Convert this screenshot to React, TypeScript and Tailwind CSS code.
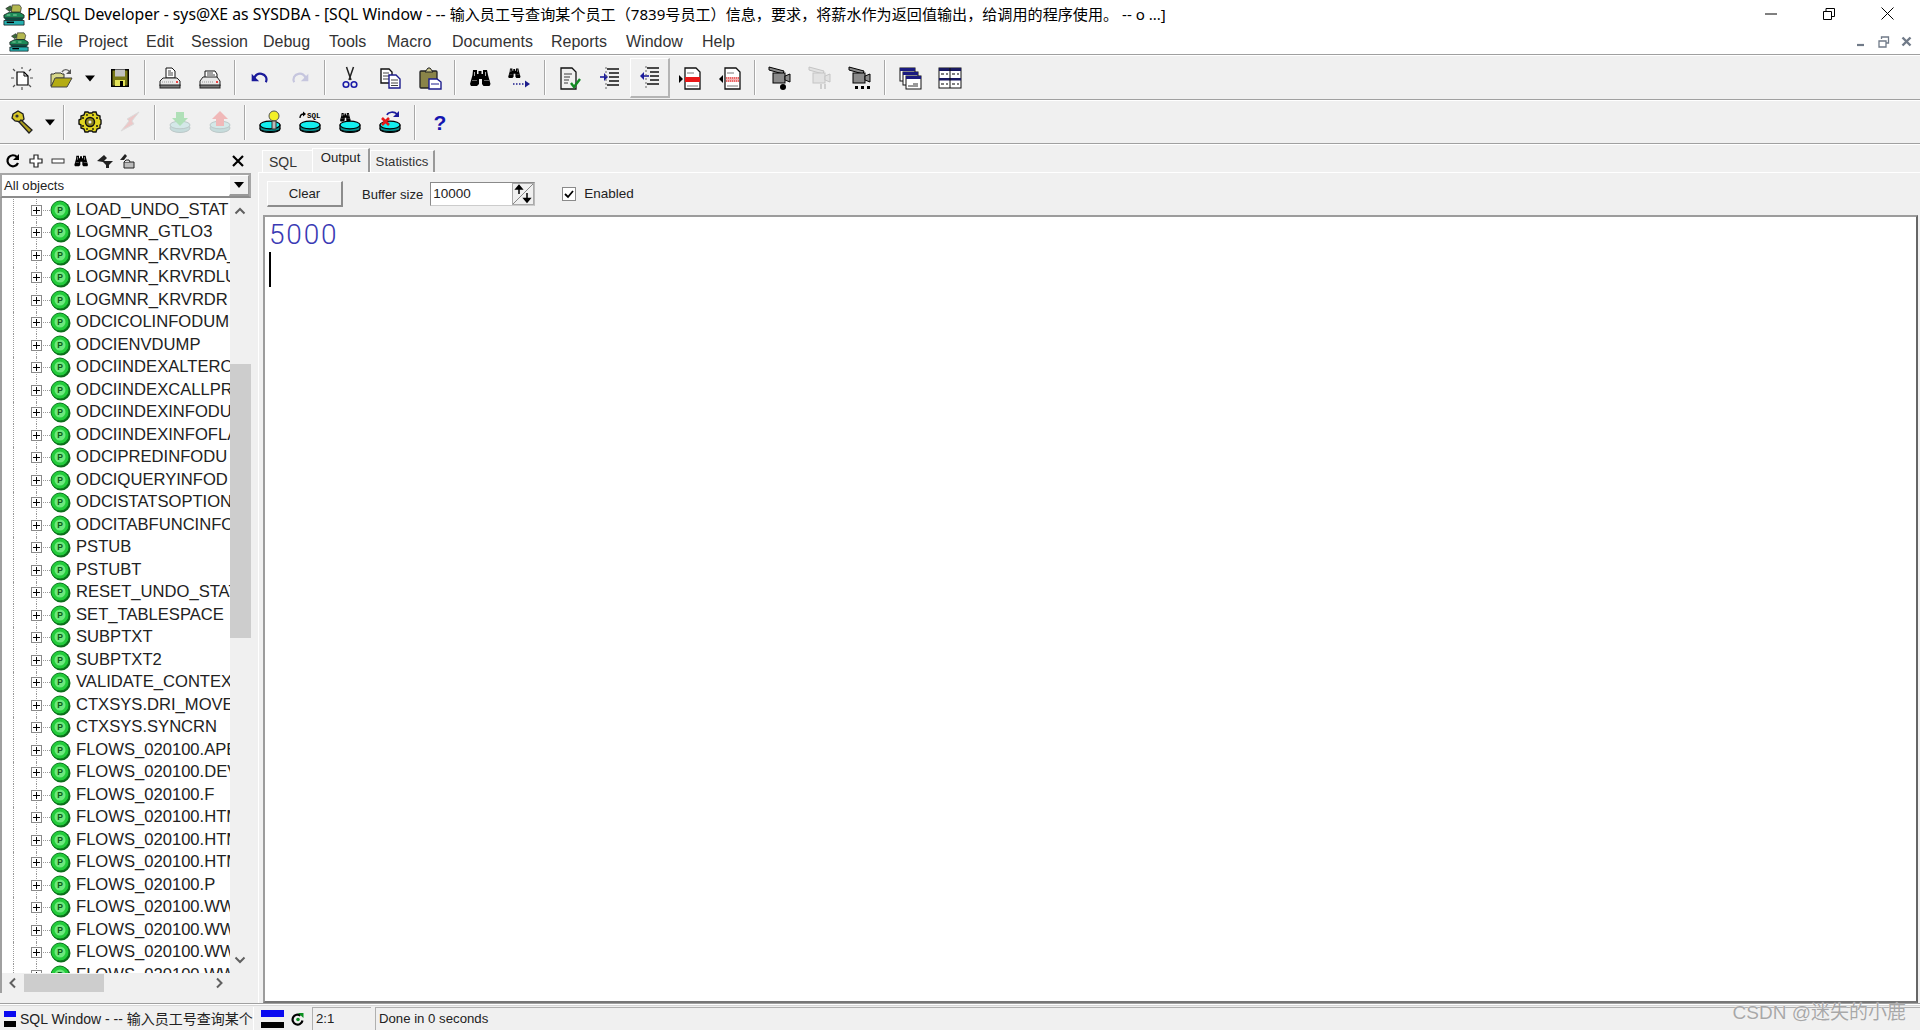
import type { ReactNode } from 'react';

const menus = [
  { label: 'File', w: 'w-[41px]' },
  { label: 'Project', w: 'w-[68px]' },
  { label: 'Edit', w: 'w-[45px]' },
  { label: 'Session', w: 'w-[72px]' },
  { label: 'Debug', w: 'w-[66px]' },
  { label: 'Tools', w: 'w-[58px]' },
  { label: 'Macro', w: 'w-[65px]' },
  { label: 'Documents', w: 'w-[99px]' },
  { label: 'Reports', w: 'w-[75px]' },
  { label: 'Window', w: 'w-[76px]' },
  { label: 'Help', w: 'w-[50px]' },
];

const objects = [
  'LOAD_UNDO_STAT', 'LOGMNR_GTLO3', 'LOGMNR_KRVRDA_T', 'LOGMNR_KRVRDLUI', 'LOGMNR_KRVRDR',
  'ODCICOLINFODUMP', 'ODCIENVDUMP', 'ODCIINDEXALTERO', 'ODCIINDEXCALLPR', 'ODCIINDEXINFODU',
  'ODCIINDEXINFOFLA', 'ODCIPREDINFODU', 'ODCIQUERYINFOD', 'ODCISTATSOPTION', 'ODCITABFUNCINFO',
  'PSTUB', 'PSTUBT', 'RESET_UNDO_STAT', 'SET_TABLESPACE', 'SUBPTXT', 'SUBPTXT2',
  'VALIDATE_CONTEXT', 'CTXSYS.DRI_MOVE', 'CTXSYS.SYNCRN', 'FLOWS_020100.APEX', 'FLOWS_020100.DEV',
  'FLOWS_020100.F', 'FLOWS_020100.HTML', 'FLOWS_020100.HTML', 'FLOWS_020100.HTML', 'FLOWS_020100.P',
  'FLOWS_020100.WWV', 'FLOWS_020100.WWV', 'FLOWS_020100.WWV', 'FLOWS_020100.WWV',
];

function Svg({ size = 24, children }: { size?: number; children: ReactNode }) {
  return (
    <svg width={size} height={size} viewBox="0 0 24 24" className="block shrink-0">
      {children}
    </svg>
  );
}

function Binoculars({ x = 0, y = 0, s = 1 }: { x?: number; y?: number; s?: number }) {
  return (
    <g transform={`translate(${x} ${y}) scale(${s})`}>
      <path d="M5 4h4v4h1.500V5h3v3H15V4h4l1 5 2.500 9-1 2h-6l-1.500-2v-5h-3v5L9 20H3l-1-2 2.500-9z" fill="#000" />
      <path d="M6 6h1v4H6zM17 6h1v4h-1z" fill="#aaa" />
      <path d="M4 14h5v1H4zM16 14h5v1h-5z" fill="#666" />
    </g>
  );
}

function Disc({ children }: { children?: ReactNode }) {
  return (
    <Svg>
      <path d="M2 15v4c0 2 4.500 3.500 10 3.500s10-1.500 10-3.500v-4z" fill="#0a8c8c" stroke="#000" strokeWidth="1.200" />
      <path d="M2 18.500c0 2 4.500 3 10 3s10-1 10-3" fill="none" stroke="#000" strokeWidth="1" />
      <ellipse cx="12" cy="15" rx="10" ry="3.800" fill="#14f0f0" stroke="#000" strokeWidth="1.200" />
      {children}
    </Svg>
  );
}

function Camera({ dim, children }: { dim?: boolean; children: ReactNode }) {
  const c = dim ? '#c4c4c4' : '#000';
  const f = dim ? '#e2e2e2' : '#8a8a8a';
  return (
    <Svg>
      <path d="M1 1l15 4-1 3L1 4z" fill={f} stroke={c} />
      <rect x="5" y="7" width="12" height="10" fill={f} stroke={c} />
      <path d="M17 10l5-2v8l-5-2z" fill={f} stroke={c} />
      {children}
    </Svg>
  );
}

function Logo({ size }: { size: number }) {
  return (
    <svg width={size} height={size} viewBox="0 0 24 24" className="block shrink-0">
      <path d="M3 5l5-3 3 3-4 3z" fill="#3a6a3a" stroke="#222" strokeWidth="0.700" />
      <path d="M10 1h8l2 3-1 5H9z" fill="#b4b850" stroke="#333" strokeWidth="0.800" />
      <path d="M1 12l6-3h11l5 3v3H1z" fill="#1c8a58" stroke="#111" strokeWidth="0.800" />
      <path d="M4 12h4M11 12h4" stroke="#9fe0b0" />
      <path d="M1 15h22l-2 3H3z" fill="#0c4a40" />
      <path d="M1 18h22v5H1z" fill="#26b0b0" stroke="#111" strokeWidth="0.800" />
      <path d="M4 20h8" stroke="#000" strokeWidth="1.600" />
    </svg>
  );
}

const icons: Record<string, ReactNode> = {
  newFile: (
    <Svg>
      <path d="M7 6h7l4 4v9H7z" fill="#fff" stroke="#000" strokeWidth="1.200" />
      <path d="M14 6v4h4" fill="none" stroke="#000" />
      <path d="M12 1v2M12 21v3M1 12h3M20 12h3M3 3l2 2M3 21l2-2M21 3l-2 2M21 21l-2-2" stroke="#555" strokeWidth="1.200" />
    </Svg>
  ),
  open: (
    <Svg>
      <path d="M2 20V8h3l1-1h6l1 1h2v4H7z" fill="#d8d88a" stroke="#333" />
      <path d="M2 21l4-9h17l-5 9z" fill="#b4ac14" stroke="#444" />
      <path d="M13 6c2-3 5-3 7-1" fill="none" stroke="#666" strokeWidth="1.400" />
      <path d="M22 3v5h-5z" fill="#555" />
    </Svg>
  ),
  caret: (
    <Svg size={12}>
      <path d="M2 7h20L12 19z" fill="#000" />
    </Svg>
  ),
  save: (
    <Svg>
      <rect x="3" y="3" width="18" height="18" fill="#000" />
      <rect x="4.500" y="4.500" width="15" height="15" fill="#777718" />
      <rect x="7" y="3.500" width="10" height="7" fill="#c2c2c2" />
      <rect x="7" y="14" width="10" height="6" fill="#e4e45a" />
      <rect x="12" y="15" width="3" height="5" fill="#000" />
    </Svg>
  ),
  print: (
    <Svg>
      <path d="M8 2h6l3 3v7H8z" fill="#fff" stroke="#111" />
      <path d="M10 5h3M10 7h5M10 9h5" stroke="#444" />
      <path d="M5 12h14l3 3v5H2v-5z" fill="#e8e8e8" stroke="#222" />
      <rect x="2" y="19" width="20" height="3" fill="#777" stroke="#222" />
      <path d="M4 16h12" stroke="#999" strokeDasharray="1 1" />
      <rect x="18" y="15" width="2" height="2" fill="#e44" />
    </Svg>
  ),
  print2: (
    <Svg>
      <path d="M7 5h10l2 3v4H7z" fill="#fff" stroke="#111" />
      <path d="M9 7h6M9 9h8" stroke="#444" />
      <path d="M5 11h14l3 4v5H2v-5z" fill="#e8e8e8" stroke="#222" />
      <rect x="2" y="19" width="20" height="3" fill="#777" stroke="#222" />
      <path d="M4 16h12" stroke="#999" strokeDasharray="1 1" />
      <rect x="18" y="15" width="2" height="2" fill="#e44" />
    </Svg>
  ),
  undo: (
    <Svg size={20}>
      <path d="M5 13c1-5 5-7 9-6 5 1 7 6 5 10" fill="none" stroke="#1a1a9a" strokeWidth="2.600" />
      <path d="M2 7v9h9z" fill="#1a1a9a" />
    </Svg>
  ),
  redo: (
    <Svg size={20}>
      <path d="M19 13c-1-5-5-7-9-6-5 1-7 6-5 10" fill="none" stroke="#c6c6de" strokeWidth="2.600" />
      <path d="M22 7v9h-9z" fill="#c6c6de" />
    </Svg>
  ),
  cut: (
    <Svg>
      <path d="M8.500 1l4.500 13M15.500 1L11 14" stroke="#222" strokeWidth="1.500" fill="none" />
      <circle cx="8" cy="18.500" r="2.800" fill="none" stroke="#1c1ca8" strokeWidth="1.600" />
      <circle cx="16" cy="18.500" r="2.800" fill="none" stroke="#1c1ca8" strokeWidth="1.600" />
    </Svg>
  ),
  copy: (
    <Svg>
      <path d="M3 3h8l3 3v11H3z" fill="#fff" stroke="#111" strokeWidth="1.400" />
      <path d="M5 7h6M5 10h6M5 13h6" stroke="#444" />
      <path d="M11 9h7l4 4v9H11z" fill="#fff" stroke="#1c1c8c" strokeWidth="1.400" />
      <path d="M13 14h7M13 17h7M13 19.500h7" stroke="#444" />
    </Svg>
  ),
  paste: (
    <Svg>
      <rect x="2" y="5" width="17" height="17" rx="1" fill="#8a8448" stroke="#222" strokeWidth="1.300" />
      <path d="M7 6l3-4h2l3 4z" fill="#c8c48a" stroke="#222" />
      <path d="M11 13h8l4 3v7H11z" fill="#fff" stroke="#1c1c8c" strokeWidth="1.400" />
      <path d="M13 18h8" stroke="#1c1c8c" />
    </Svg>
  ),
  find: <Svg><Binoculars /></Svg>,
  findNext: (
    <Svg>
      <Binoculars x={-1} y={0} s={0.6} />
      <path d="M5 18h13" stroke="#1c1c8c" strokeWidth="1.400" strokeDasharray="1.500 1.500" />
      <path d="M17 14.500v7l5-3.500z" fill="#1c1c8c" />
    </Svg>
  ),
  docCheck: (
    <Svg>
      <path d="M3 2h11l4 4v17H3z" fill="#efefef" stroke="#111" strokeWidth="1.300" />
      <path d="M6 8h8M6 11h6M6 14h5M6 17h4" stroke="#777" strokeWidth="1.400" />
      <path d="M13 17l3 4 6-8" fill="none" stroke="#118a22" strokeWidth="2.400" />
    </Svg>
  ),
  indent: (
    <Svg>
      <path d="M9 3h12M11 7h10M11 11h10M11 15h10M9 19h12" stroke="#111" strokeWidth="1.700" />
      <path d="M2 11h5" stroke="#1c1c9c" strokeWidth="1.600" />
      <path d="M6 7v8l4-4z" fill="#1c1c9c" />
      <path d="M8 1v22" stroke="#666" strokeDasharray="2 2" />
    </Svg>
  ),
  outdent: (
    <Svg>
      <path d="M9 3h12M12 7h9M12 11h9M12 15h9M9 19h12" stroke="#111" strokeWidth="1.700" />
      <path d="M5 11h6" stroke="#1c1c9c" strokeWidth="1.600" />
      <path d="M6 7v8l-4-4z" fill="#1c1c9c" />
      <path d="M8 1v22" stroke="#666" strokeDasharray="2 2" />
    </Svg>
  ),
  docRed: (
    <Svg>
      <path d="M7 2h11l4 4v17H7z" fill="#fff" stroke="#111" strokeWidth="1.300" />
      <path d="M9 7h7M9 20h11" stroke="#777" />
      <rect x="7" y="11" width="15" height="5" fill="#e81818" />
      <path d="M1 9l4 4-4 4z" fill="#000" />
    </Svg>
  ),
  docRedDots: (
    <Svg>
      <path d="M7 2h11l4 4v17H7z" fill="#fff" stroke="#111" strokeWidth="1.300" />
      <path d="M9 7h7M9 20h11" stroke="#777" />
      <rect x="8" y="11" width="13" height="5" fill="#f4b0b0" />
      <path d="M8 12h13M8 15h13" stroke="#e02020" strokeDasharray="1 1" />
      <path d="M5 9l-4 4 4 4z" fill="#000" />
    </Svg>
  ),
  camRec: (
    <Camera>
      <circle cx="15" cy="21" r="3" fill="#000" />
    </Camera>
  ),
  camPause: (
    <Camera dim>
      <path d="M12 18h2v5h-2zM16 18h2v5h-2z" fill="#cfcfcf" />
    </Camera>
  ),
  camDots: (
    <Camera>
      <path d="M7 20h3v3H7zM13 20h3v3h-3zM19 20h3v3h-3z" fill="#000" />
    </Camera>
  ),
  cascade: (
    <Svg>
      <rect x="2" y="2" width="15" height="13" fill="#fff" stroke="#111" />
      <rect x="2" y="2" width="15" height="3" fill="#1a1a80" />
      <rect x="5" y="6" width="15" height="13" fill="#fff" stroke="#111" />
      <rect x="5" y="6" width="15" height="3" fill="#1a1a80" />
      <rect x="8" y="10" width="15" height="13" fill="#fff" stroke="#111" />
      <rect x="8" y="10" width="15" height="3" fill="#1a1a80" />
      <path d="M15 18h5M10 20h10" stroke="#333" />
    </Svg>
  ),
  tile: (
    <Svg>
      <rect x="1" y="2" width="22" height="20" fill="#fff" stroke="#111" />
      <rect x="1" y="2" width="22" height="3" fill="#1a1a60" />
      <rect x="1" y="12" width="22" height="2.500" fill="#1a1a60" />
      <path d="M12 2v20" stroke="#111" />
      <path d="M3 8h3M8 8h2M14 8h3M19 8h2M3 18h3M8 18h2M14 18h3M19 18h2" stroke="#555" strokeWidth="1.500" />
    </Svg>
  ),
  key: (
    <Svg>
      <path d="M3 4l5-3 5 3 1 5-3 3-6-1-3-3z" fill="#d8c828" stroke="#222" strokeWidth="1.300" />
      <circle cx="7" cy="6" r="1.600" fill="#333" />
      <path d="M11 10l11 10-3 3L9 12z" fill="#b0a020" stroke="#222" strokeWidth="1.300" />
    </Svg>
  ),
  gear: (
    <Svg>
      <path d="M7 2h3l1 1h3l1-1h3l1 3 3 1v3l1 1v4l-1 1v3l-3 1-1 3h-3l-1-1h-3l-1 1H7l-1-3-3-1v-3l-2-1v-4l2-1V6l3-1z" fill="#e0d420" stroke="#111" strokeWidth="1.400" />
      <circle cx="12" cy="12" r="4.500" fill="#8c8420" stroke="#111" strokeWidth="1.400" />
      <circle cx="12" cy="12" r="1.500" fill="#eee" />
      <path d="M4 8h2M4 16h2M18 8h2M18 16h2M9 4v2M15 4v2M9 18v2M15 18v2" stroke="#111" strokeWidth="1.300" />
    </Svg>
  ),
  bolt: (
    <Svg>
      <path d="M21 2L9 9l2 2-8 10 13-7-2-3z" fill="#ecc8c8" stroke="#dcdcdc" />
    </Svg>
  ),
  dbDown: (
    <Svg>
      <ellipse cx="12" cy="18" rx="10" ry="4.500" fill="#c6dcdc" stroke="#bcc8c8" />
      <ellipse cx="12" cy="15" rx="10" ry="3.800" fill="#d4e8e8" stroke="#bcc8c8" />
      <path d="M8 2h8v6h4l-8 8-8-8h4z" fill="#b0e0b8" />
    </Svg>
  ),
  dbUp: (
    <Svg>
      <ellipse cx="12" cy="18" rx="10" ry="4.500" fill="#c6dcdc" stroke="#bcc8c8" />
      <ellipse cx="12" cy="15" rx="10" ry="3.800" fill="#d4e8e8" stroke="#bcc8c8" />
      <path d="M8 16h8v-7h4l-8-8-8 8h4z" fill="#f0b8b8" />
    </Svg>
  ),
  dbBulb: (
    <Disc>
      <circle cx="16" cy="6" r="5" fill="#f4f028" stroke="#555" />
      <path d="M14 11h4v8h-4z" fill="#bbb" stroke="#333" />
    </Disc>
  ),
  dbSql: (
    <Disc>
      <path d="M2 8c0-3 1-4 4-4" fill="none" stroke="#000" strokeWidth="1.300" />
      <path d="M5 1.500v5l3-2.500z" fill="#000" />
      <text x="9" y="8" fontSize="7.500" fontWeight="700" fontFamily="'Liberation Mono', monospace" fill="#000">SQL</text>
    </Disc>
  ),
  dbFind: (
    <Disc>
      <Binoculars x={1} y={1} s={0.52} />
    </Disc>
  ),
  dbCancel: (
    <Disc>
      <path d="M9 5c1-3 7-4 10-1" fill="none" stroke="#1c1c9c" strokeWidth="1.600" />
      <path d="M21 1v6h-6z" fill="#1c1c9c" />
      <path d="M4 8l7 7M11 8l-7 7" stroke="#e81818" strokeWidth="2.600" />
    </Disc>
  ),
  help: (
    <Svg>
      <text x="12" y="20" textAnchor="middle" fontSize="21" fontWeight="700" fontFamily="'Liberation Sans', sans-serif" fill="#1515b0">?</text>
    </Svg>
  ),
};

function Separator({ w }: { w: string }) {
  return (
    <div className={`${w} flex h-full items-center justify-center`}>
      <div className="h-[35px] w-[2px] border-l border-[#a8a8a8] bg-white" />
    </div>
  );
}

function Tool({ icon, pressed, w = 'w-10' }: { icon: string; pressed?: boolean; w?: string }) {
  return (
    <div
      className={`${w} flex h-[40px] items-center justify-center ${
        pressed ? 'border-t border-l border-white border-r-2 border-b-2 border-r-[#b4b4b4] border-b-[#b4b4b4]' : ''
      }`}
    >
      {icons[icon]}
    </div>
  );
}

function TopLine() {
  return <div className="h-[2px] w-full border-t border-[#a0a0a0] bg-white" />;
}

function ExplorerTool({ w, children }: { w: string; children: ReactNode }) {
  return <div className={`${w} flex items-center justify-center`}>{children}</div>;
}

function TreeRow({ name }: { name: string }) {
  return (
    <div className="flex h-[22.5px] shrink-0 items-center">
      <div className="h-full w-[11px] shrink-0" />
      <div className="h-full w-[18px] shrink-0 border-l border-dotted border-[#999]" />
      <div className="relative flex h-full w-[12px] shrink-0 items-center">
        <div className="absolute left-[5px] top-0 h-full border-l border-dotted border-[#999]" />
        <div className="relative flex h-[11px] w-[11px] items-center justify-center border border-[#8a8a8a] bg-white">
          <svg width="7" height="7" viewBox="0 0 7 7" className="block">
            <path d="M0 3.500h7M3.500 0v7" stroke="#000" strokeWidth="1" />
          </svg>
        </div>
      </div>
      <div className="w-[7px] shrink-0 border-t border-dotted border-[#999]" />
      <svg width="21" height="21" viewBox="0 0 21 21" className="block shrink-0">
        <circle cx="11" cy="11" r="9.500" fill="#0a6c18" />
        <circle cx="10" cy="10" r="9" fill="#22cc3a" stroke="#0c7a20" />
        <circle cx="10" cy="10" r="5.500" fill="#6ee87e" />
        <text x="10" y="13" textAnchor="middle" fontSize="8.500" fontWeight="700" fontFamily="'Liberation Sans', sans-serif" fill="#0a5a18">P</text>
      </svg>
      <span className="ml-[5px] whitespace-nowrap text-[16.6px] leading-none text-[#222]">{name}</span>
    </div>
  );
}

function Chevron({ d }: { d: string }) {
  return (
    <svg width="12" height="12" viewBox="0 0 12 12" className="block">
      <path d={d} fill="none" stroke="#606060" strokeWidth="2" />
    </svg>
  );
}

function Explorer() {
  return (
    <aside className="flex h-full w-[258px] shrink-0 flex-col">
      <div className="flex h-[28px] shrink-0 items-center pt-[3px]">
        <ExplorerTool w="w-[25px]">
          <svg width="16" height="16" viewBox="0 0 16 16" className="block">
            <path d="M13 10a5.500 5.500 0 1 1-1-6" fill="none" stroke="#000" strokeWidth="2.200" />
            <path d="M14 1v6H8z" fill="#000" />
          </svg>
        </ExplorerTool>
        <ExplorerTool w="w-[22px]">
          <svg width="14" height="14" viewBox="0 0 14 14" className="block">
            <path d="M5 1h4v4h4v4H9v4H5V9H1V5h4z" fill="#fff" stroke="#222" strokeWidth="1.200" />
          </svg>
        </ExplorerTool>
        <ExplorerTool w="w-[21px]">
          <svg width="14" height="14" viewBox="0 0 14 14" className="block">
            <rect x="1" y="5" width="12" height="4" fill="#fff" stroke="#333" />
          </svg>
        </ExplorerTool>
        <ExplorerTool w="w-[26px]">
          <Svg size={16}><Binoculars /></Svg>
        </ExplorerTool>
        <ExplorerTool w="w-[21px]">
          <svg width="18" height="16" viewBox="0 0 18 16" className="block">
            <path d="M1 8l7-6 3 3-4 4zM6 8h11l-4 4v3h-3v-3z" fill="#222" />
          </svg>
        </ExplorerTool>
        <ExplorerTool w="w-[24px]">
          <svg width="16" height="16" viewBox="0 0 16 16" className="block">
            <path d="M1 7l5-6 2 2-3 4z" fill="#222" />
            <path d="M5 9h10v6H5z" fill="#bbb" stroke="#222" />
            <path d="M5 9l2-2h3l1 2" fill="#ddd" stroke="#222" />
          </svg>
        </ExplorerTool>
        <div className="flex-1" />
        <svg width="14" height="14" viewBox="0 0 14 14" className="mr-[13px] block">
          <path d="M2 2l10 10M12 2L2 12" stroke="#000" strokeWidth="2.200" />
        </svg>
      </div>

      <div className="mr-[7px] flex h-[25px] shrink-0 items-stretch border-2 border-[#a6a6a6] bg-white border-b-[#8c8c8c]">
        <span className="flex-1 self-center pl-[2px] text-[13.2px] leading-none text-[#222]">All objects</span>
        <div className="flex w-[20px] items-center justify-center border-t border-l border-white bg-[#f0f0f0] border-b-2 border-r border-b-[#999] border-r-[#999]">
          <svg width="10" height="6" viewBox="0 0 10 6" className="block">
            <path d="M0 0h10L5 6z" fill="#000" />
          </svg>
        </div>
      </div>

      <div className="mr-[7px] flex min-h-0 flex-1 flex-col border-l-2 border-[#a0a0a0]">
        <div className="flex min-h-0 flex-1">
          <div className="min-w-0 flex-1 overflow-hidden bg-white pt-[1px]">
            {objects.map((name, i) => (
              <TreeRow key={i} name={name} />
            ))}
          </div>
          <div className="flex w-[21px] shrink-0 flex-col bg-[#f0f0f0]">
            <div className="flex h-[22px] items-center justify-center pt-[4px] pr-[2px]">
              <Chevron d="M1.500 8.500L6 4l4.500 4.500" />
            </div>
            <div className="mt-[144px] h-[274px] bg-[#cdcdcd]" />
            <div className="flex-1" />
            <div className="flex h-[22px] items-center justify-center pb-[4px] pr-[2px]">
              <Chevron d="M1.500 3.500L6 8l4.500-4.500" />
            </div>
          </div>
        </div>
        <div className="flex h-[20px] shrink-0 items-center bg-[#f0f0f0]">
          <div className="flex w-[22px] justify-center">
            <Chevron d="M8 1.500L3.500 6 8 10.500" />
          </div>
          <div className="h-[18px] w-[80px] bg-[#cdcdcd]" />
          <div className="flex-1" />
          <div className="flex w-[16px] justify-center">
            <Chevron d="M4 1.500L8.500 6 4 10.500" />
          </div>
          <div className="w-[24px]" />
        </div>
      </div>
      <div className="h-[10px] shrink-0" />
    </aside>
  );
}

function OutputPane() {
  return (
    <main className="flex h-full min-w-0 flex-1 flex-col">
      <div className="flex h-[27px] shrink-0 items-end pl-[4px]">
        <div className="flex h-[22px] w-[50px] items-center border-t border-l border-white pl-[6px] text-[14px] leading-none text-[#333]">
          SQL
        </div>
        <div className="mb-[-1px] flex h-[25px] w-[58px] items-start justify-center border-t border-l border-white border-r-2 border-r-[#999] pt-[2px] text-[13.2px] leading-none text-[#222]">
          Output
        </div>
        <div className="flex h-[22px] w-[65px] items-center justify-center border-t border-l border-white border-r-2 border-r-[#999] text-[13.2px] leading-none text-[#333]">
          Statistics
        </div>
      </div>
      <div className="flex min-h-0 flex-1 flex-col border-t border-l border-white pl-[4px] pr-[1px]">
        <div className="flex h-[42px] shrink-0 items-center pl-[4px]">
          <button className="h-[26px] w-[76px] border-t border-l border-white border-r-2 border-b-2 border-r-[#8c8c8c] border-b-[#8c8c8c] bg-[#f0f0f0] text-[13.200px] leading-none text-[#222]">
            Clear
          </button>
          <span className="ml-[19px] text-[13px] leading-none text-[#222]">Buffer size</span>
          <div className="ml-[7px] flex h-[24px] w-[105px] items-stretch border border-[#8a8a8a] border-r-[#bbb] border-b-[#ccc] bg-white">
            <span className="flex-1 self-center pl-[2px] text-[13.500px] leading-none text-[#222]">10000</span>
            <svg width="22" height="22" viewBox="0 0 22 22" className="block shrink-0 bg-[#f0f0f0]">
              <path d="M0 22L22 0" stroke="#888" />
              <rect x="0.500" y="0.500" width="21" height="21" fill="none" stroke="#aaa" />
              <path d="M7 11V6M4 6l3-3.500L10 6z" stroke="#000" strokeWidth="1.500" />
              <path d="M15 10v6M12 15.500l3 3.500 3-3.500z" stroke="#000" strokeWidth="1.500" />
            </svg>
          </div>
          <div className="ml-[27px] flex h-[14px] w-[14px] items-center justify-center border border-[#8a8a8a] bg-white">
            <svg width="10" height="10" viewBox="0 0 10 10" className="block">
              <path d="M1 5l3 3 5-6" fill="none" stroke="#000" strokeWidth="1.800" />
            </svg>
          </div>
          <span className="ml-[8px] text-[13.500px] leading-none text-[#222]">Enabled</span>
        </div>
        <div className="mr-[1px] min-h-0 flex-1 border-2 border-[#9c9c9c] border-r-[#666] border-b-[#777] bg-white pl-[4px]">
          <div className="h-[35px] font-['Roboto',sans-serif] text-[28px] font-light leading-[35px] tracking-[1.8px] text-[#3a3ab4]">
            5000
          </div>
          <div className="h-[35px] w-[2px] bg-black" />
        </div>
      </div>
    </main>
  );
}

function StatusBar() {
  return (
    <footer className="flex h-[25px] shrink-0 items-stretch border-t border-[#d8d8d8] pl-[4px] pt-[1px] text-[13.200px] leading-none text-[#222]">
      <div className="flex w-[250px] items-center overflow-hidden border-r border-white">
        <svg width="12" height="17" viewBox="0 0 12 17" className="block shrink-0">
          <rect width="12" height="6" y="1" fill="#0a0af0" />
          <rect width="12" height="6" y="11" fill="#000" />
        </svg>
        <span className="ml-[4px] whitespace-nowrap font-['Liberation_Sans','Noto_Sans_CJK_SC',sans-serif] text-[14px]">
          SQL Window - -- 输入员工号查询某个
        </span>
      </div>
      <div className="ml-[7px] flex w-[50px] items-center">
        <svg width="23" height="18" viewBox="0 0 23 18" className="block shrink-0">
          <rect width="23" height="7" y="0" fill="#0a0af0" />
          <rect width="23" height="6" y="12" fill="#000" />
        </svg>
        <svg width="14" height="14" viewBox="0 0 14 14" className="ml-[7px] block shrink-0">
          <path d="M11.500 8.500a5 5 0 1 1-2-5" fill="none" stroke="#000" strokeWidth="2.200" />
          <path d="M7 1h5.500v5z" fill="#0a9020" />
          <circle cx="7" cy="7.500" r="1.800" fill="#0a9020" />
        </svg>
      </div>
      <div className="ml-[1px] flex w-[59px] items-center border-t border-l border-[#b0b0b0] pl-[3px]">2:1</div>
      <div className="ml-[4px] flex flex-1 items-center border-t border-l border-[#b0b0b0] pl-[3px]">
        Done in 0 seconds
      </div>
    </footer>
  );
}

export default function App() {
  return (
    <div className="relative flex h-[1030px] w-[1920px] flex-col overflow-hidden bg-[#f0f0f0] font-['Liberation_Sans',sans-serif]">
      {/* Title bar */}
      <header className="flex h-[29px] shrink-0 items-center bg-white pl-[3px]">
        <Logo size={22} />
        <span className="ml-[2px] whitespace-nowrap font-['Noto_Sans','Noto_Sans_CJK_SC',sans-serif] text-[15.1px] leading-none text-black">
          <span className="text-[15.75px]">PL/SQL Developer - sys@XE as SYSDBA - [SQL Window - -- </span>
          输入员工号查询某个员工（7839号员工）信息，要求，将薪水作为返回值输出，给调用的程序使用。 -- o ...]
        </span>
        <div className="flex-1" />
        <div className="flex h-full items-center pr-[4px]">
          <div className="flex w-[58px] justify-center pb-[2px]">
            <svg width="12" height="2" viewBox="0 0 12 2" className="block">
              <path d="M0 1h12" stroke="#000" />
            </svg>
          </div>
          <div className="flex w-[58px] justify-center pb-[2px]">
            <svg width="12" height="12" viewBox="0 0 12 12" className="block">
              <path d="M.500 3.500h8v8h-8zM3 3.500V.500h8.500v8H8.500" fill="none" stroke="#000" />
            </svg>
          </div>
          <div className="flex w-[58px] justify-center pb-[2px]">
            <svg width="13" height="13" viewBox="0 0 13 13" className="block">
              <path d="M.500.500l12 12M12.500.500l-12 12" stroke="#000" />
            </svg>
          </div>
        </div>
      </header>

      {/* Menu bar */}
      <nav className="flex h-[25px] shrink-0 items-center bg-white pl-[9px]">
        <Logo size={20} />
        <div className="ml-[8px] flex text-[16px] leading-none text-[#333]">
          {menus.map((m) => (
            <span key={m.label} className={m.w}>
              {m.label}
            </span>
          ))}
        </div>
        <div className="flex-1" />
        <div className="flex items-center gap-[2px] pr-[3px]">
          <div className="flex h-[22px] w-[21px] items-center justify-center bg-white">
            <svg width="10" height="10" viewBox="0 0 10 10" className="block">
              <path d="M1 8h7" stroke="#707a88" strokeWidth="2.200" />
            </svg>
          </div>
          <div className="flex h-[22px] w-[21px] items-center justify-center bg-white">
            <svg width="12" height="12" viewBox="0 0 12 12" className="block">
              <path d="M1 5h7v6H1zM3.500 3V1h7v6H8.500" fill="none" stroke="#707a88" strokeWidth="1.300" />
            </svg>
          </div>
          <div className="flex h-[22px] w-[21px] items-center justify-center bg-white">
            <svg width="11" height="11" viewBox="0 0 11 11" className="block">
              <path d="M1.500 1.500l8 8M9.500 1.500l-8 8" stroke="#707a88" strokeWidth="2.400" />
            </svg>
          </div>
        </div>
      </nav>

      {/* Toolbars */}
      <TopLine />
      <div className="flex h-[43px] shrink-0 items-center pl-[2px]">
        <Tool icon="newFile" />
        <Tool icon="open" w="w-[38px]" />
        <Tool icon="caret" w="w-[20px]" />
        <Tool icon="save" />
        <Separator w="w-[10px]" />
        <Tool icon="print" />
        <Tool icon="print2" />
        <Separator w="w-[10px]" />
        <Tool icon="undo" />
        <Tool icon="redo" />
        <Separator w="w-[10px]" />
        <Tool icon="cut" />
        <Tool icon="copy" />
        <Tool icon="paste" />
        <Separator w="w-[10px]" />
        <Tool icon="find" />
        <Tool icon="findNext" />
        <Separator w="w-[10px]" />
        <Tool icon="docCheck" />
        <Tool icon="indent" />
        <Tool icon="outdent" pressed />
        <Tool icon="docRed" />
        <Tool icon="docRedDots" />
        <Separator w="w-[10px]" />
        <Tool icon="camRec" />
        <Tool icon="camPause" />
        <Tool icon="camDots" />
        <Separator w="w-[10px]" />
        <Tool icon="cascade" />
        <Tool icon="tile" />
      </div>
      <TopLine />
      <div className="flex h-[42px] shrink-0 items-center pl-[2px]">
        <Tool icon="key" />
        <Tool icon="caret" w="w-[16px]" />
        <Separator w="w-[12px]" />
        <Tool icon="gear" />
        <Tool icon="bolt" />
        <Separator w="w-[10px]" />
        <Tool icon="dbDown" />
        <Tool icon="dbUp" />
        <Separator w="w-[10px]" />
        <Tool icon="dbBulb" />
        <Tool icon="dbSql" />
        <Tool icon="dbFind" />
        <Tool icon="dbCancel" />
        <Separator w="w-[10px]" />
        <Tool icon="help" />
      </div>
      <TopLine />

      {/* Workspace */}
      <div className="flex min-h-0 flex-1">
        <Explorer />
        <OutputPane />
      </div>
      <div className="h-[2px] shrink-0 border-t border-[#a0a0a0] bg-white" />
      <StatusBar />

      {/* Watermark */}
      <div className="pointer-events-none absolute bottom-[8px] right-[14px] font-['Liberation_Sans','Noto_Sans_CJK_SC',sans-serif] text-[19px] leading-none text-[#a8a8a8] [text-shadow:0_0_1px_#fff]">
        CSDN @迷失的小鹿
      </div>
    </div>
  );
}
